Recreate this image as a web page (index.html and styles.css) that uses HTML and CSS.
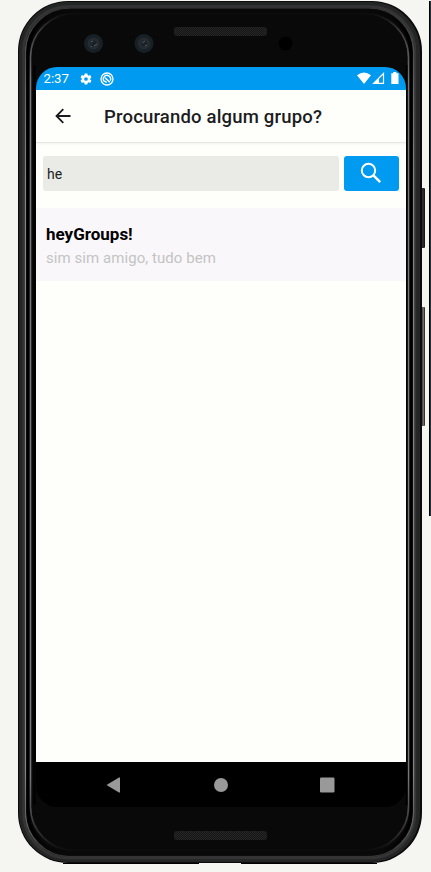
FILE: index.html
```html
<!DOCTYPE html>
<html lang="pt-BR">
<head>
<meta charset="utf-8">
<title>heyGroups</title>
<link rel="stylesheet" href="styles.css">
</head>
<body>
<div class="edge"></div>
<div class="phone">
  <svg class="frame" width="413" height="872" viewBox="18 0 413 872" fill="none" aria-hidden="true">
    <defs>
      <linearGradient id="fade" gradientUnits="userSpaceOnUse" x1="0" y1="12" x2="0" y2="852">
        <stop offset="0" stop-color="#777" stop-opacity="0"/>
        <stop offset=".02" stop-color="#777" stop-opacity=".4"/>
        <stop offset=".08" stop-color="#777"/>
        <stop offset=".91" stop-color="#777"/>
        <stop offset=".98" stop-color="#777" stop-opacity=".3"/>
        <stop offset="1" stop-color="#777" stop-opacity="0"/>
      </linearGradient>
      <linearGradient id="ring" gradientUnits="userSpaceOnUse" x1="0" y1="9" x2="0" y2="855">
        <stop offset="0" stop-color="#090909"/>
        <stop offset=".03" stop-color="#000"/>
        <stop offset=".97" stop-color="#000"/>
        <stop offset="1" stop-color="#090909"/>
      </linearGradient>
      <linearGradient id="fade2" gradientUnits="userSpaceOnUse" x1="0" y1="8" x2="0" y2="856">
        <stop offset="0" stop-color="#333"/>
        <stop offset=".1" stop-color="#666"/>
        <stop offset=".2" stop-color="#858585"/>
        <stop offset=".9" stop-color="#858585"/>
        <stop offset=".97" stop-color="#555"/>
        <stop offset="1" stop-color="#333"/>
      </linearGradient>
      <linearGradient id="key" x1="0" y1="0" x2="1" y2="0">
        <stop offset="0" stop-color="#171312"/><stop offset=".6" stop-color="#77706d"/><stop offset="1" stop-color="#171312"/>
      </linearGradient>
      <pattern id="mesh" width="2" height="2" patternUnits="userSpaceOnUse">
        <rect width="2" height="2" fill="#161616"/><path d="M0 0h1v1H0zM1 1h1v1H1z" fill="#262626"/>
      </pattern>
    </defs>
    <rect x="420" y="188" width="5" height="60" rx="1" fill="#2a2a2c"/>
    <path d="M424.500 189v58" stroke="#151515"/>
    <rect x="421" y="307" width="4" height="119" rx="1" fill="url(#key)"/>
    <rect x="18" y="1" width="404" height="862" rx="50" fill="#0b0b0b"/>
    <path d="M63 863.500H199M241 863.500H377" stroke="#000"/>
    <rect x="21.500" y="4.500" width="396" height="855" rx="47" stroke="#242525" stroke-width="5"/>
    <rect x="23.500" y="6.500" width="391.500" height="851.500" rx="45" stroke="#343434" stroke-width="2.500"/>
    <rect x="25.500" y="8" width="388" height="848.500" rx="44" stroke="url(#fade2)" stroke-width="1.400"/>
    <rect x="28" y="10.500" width="383" height="843.500" rx="42" fill="#090909" stroke="url(#ring)" stroke-width="3.400"/>
    <rect x="30.500" y="13.500" width="378" height="837" rx="44" stroke="url(#fade)" stroke-width="1.600"/>
    <path d="M34.500 65V805M406.500 65V805" stroke="#000" stroke-width="2"/>
    <rect x="174" y="27" width="93" height="9" rx="3" fill="url(#mesh)"/>
    <rect x="174" y="831" width="93" height="9" rx="3" fill="url(#mesh)"/>
    <circle cx="93.500" cy="43.500" r="9.500" fill="#172027"/>
    <circle cx="93.500" cy="43.500" r="6" fill="#282b2e"/>
    <circle cx="93.500" cy="43.500" r="3" fill="#18222b"/>
    <path d="M91 42l2-1M94 46l3-2M91 46l1 1" stroke="#555d62"/>
    <circle cx="144" cy="43.500" r="9.500" fill="#172027"/>
    <circle cx="144" cy="43.500" r="6" fill="#282b2e"/>
    <circle cx="144" cy="43.500" r="3" fill="#18222b"/>
    <path d="M142 43l3-2M145 46l2-1" stroke="#555d62"/>
    <circle cx="285.500" cy="43.500" r="7" fill="#000"/>
  </svg>
  <main class="screen">
    <div class="status">
      <span class="clock">2:37</span>
      <svg class="gear" width="14" height="14" viewBox="0 0 24 24"><path fill="#fff" fill-rule="evenodd" d="M19.140 12.940c.040-.300.060-.610.060-.940s-.020-.640-.070-.940l2.030-1.580c.180-.140.230-.410.120-.610l-1.920-3.320c-.120-.220-.370-.290-.590-.220l-2.390.960c-.500-.380-1.030-.700-1.620-.940l-.360-2.540c-.040-.240-.240-.410-.480-.410h-3.840c-.240 0-.430.170-.470.410l-.360 2.540c-.590.240-1.130.570-1.620.940l-2.390-.960c-.220-.080-.470 0-.590.220L2.740 8.870c-.120.210-.080.470.120.610l2.030 1.580c-.050.300-.090.630-.090.940s.020.640.070.940l-2.030 1.580c-.180.140-.230.410-.120.610l1.920 3.320c.120.220.370.290.590.220l2.390-.960c.500.380 1.030.700 1.620.940l.360 2.540c.050.240.240.410.480.410h3.840c.240 0 .440-.170.470-.410l.360-2.540c.590-.240 1.130-.560 1.620-.940l2.390.960c.220.080.470 0 .590-.220l1.920-3.320c.120-.220.070-.470-.120-.610zM12 15.200a3.200 3.200 0 1 1 0-6.400 3.200 3.200 0 0 1 0 6.400z"/></svg>
      <svg class="sync" width="14" height="14" viewBox="0 0 14 14" fill="none" stroke="#fff"><circle cx="7" cy="7" r="6" stroke-width="1.300"/><path d="M4 9.300A3.700 3.700 0 1 1 10.300 8.800" stroke-width="1.300"/><path d="M5 5.800l4.800 4.500M4.200 8.800l2.500 1.700" stroke-width="1.500"/></svg>
      <svg class="signals" width="42" height="13" viewBox="0 0 42 13"><path fill="#fff" d="M0 3.200Q7-2.200 14 3.200L7 12zM34.300 1.300h2V0h3v1.300h2.200V12h-7.200z"/><path d="M16.600 11.400H26.500V1.500z" fill="none" stroke="#fff" stroke-width="1.200"/><path fill="#fff" d="M16 12L22 6v6z"/></svg>
    </div>
    <div class="content">
      <header class="bar">
        <svg class="back" width="16" height="16" viewBox="0 0 16 16" fill="none" stroke="#1c1c1e" stroke-width="1.800"><path d="M15.500 8H1.800M8.300 1.200L1.500 8l6.800 6.800"/></svg>
        <h1 class="title">Procurando algum grupo?</h1>
      </header>
      <div class="search">
        <div class="field">he</div>
        <div class="button"><svg width="22" height="22" viewBox="0 0 22 22" fill="none" stroke="#fff"><circle cx="8.500" cy="8.500" r="6.700" stroke-width="2"/><path d="M13.200 13.200l7 7" stroke-width="2.500"/></svg></div>
      </div>
      <div class="group">
        <div class="name">heyGroups!</div>
        <div class="desc">sim sim amigo, tudo bem</div>
      </div>
    </div>
    <nav class="nav">
      <svg width="230" height="16" viewBox="0 0 230 16" fill="#999"><path d="M.500 8L13 .500H14v15H13z"/><circle cx="115" cy="8" r="7"/><rect x="214" y=".500" width="14.500" height="15" rx="1.300"/></svg>
    </nav>
  </main>
</div>
</body>
</html>
```
FILE: styles.css
```css
* { box-sizing: border-box; }
html, body { height: 100%; overflow: hidden; }
body {
  margin: 0;
  background: #f5f5f2;
  font-family: Roboto, sans-serif;
}
.edge {
  position: absolute;
  top: 1px;
  right: 0;
  width: 2px;
  height: 515px;
  background: #26313b;
  border-left: 1px solid #000;
}
.phone {
  position: relative;
  width: 404px;
  height: 872px;
  margin-left: 18px;
  padding: 67px 16px 0 18px;
}
.frame { position: absolute; left: 0; top: 0; }
.screen {
  position: relative;
  display: flex;
  flex-direction: column;
  width: 370px;
  height: 740px;
  border-radius: 21px;
  overflow: hidden;
}
.content { flex: 1; background: #fefffb; }
.status {
  display: flex;
  align-items: center;
  height: 23px;
  padding: 0 7px 0 7.500px;
  background: #009bf0;
  color: #fff;
  flex: none;
}
.clock { width: 26.500px; font-size: 13.200px; line-height: 23px; }
.gear { margin-left: 9px; }
.sync { margin-left: 7px; }
.signals { margin-left: auto; }
.bar {
  display: flex;
  align-items: center;
  height: 53px;
  padding-left: 18.500px;
  border-bottom: 1px solid #e6e6e3;
  box-shadow: 0 1px 2px #0000000d;
}
.title {
  margin: 2px 0 0 33.500px;
  font-size: 18.500px;
  font-weight: 500;
  letter-spacing: .18px;
  line-height: 24px;
  color: #1c1c1e;
  white-space: nowrap;
}
.search {
  display: flex;
  gap: 5px;
  padding: 13px 7px 17px;
}
.field {
  width: 296px;
  height: 35px;
  padding-left: 4px;
  border-radius: 3px;
  background: #eaebe6;
  font-size: 14px;
  line-height: 36px;
  color: #222;
}
.button {
  display: flex;
  align-items: center;
  justify-content: center;
  width: 55px;
  height: 35px;
  padding: 0 1px 1px 0;
  border-radius: 3px;
  background: #009bf0;
}
.group {
  height: 73px;
  padding: 15px 10px 0;
  background: #f9f7f9;
}
.name { font-size: 17px; font-weight: 700; line-height: 22px; color: #000; }
.desc {
  margin-top: 1px;
  font-size: 15px;
  letter-spacing: .06px;
  line-height: 24px;
  color: #c4c4c4;
  white-space: nowrap;
}
.nav {
  display: flex;
  align-items: center;
  height: 45px;
  padding-left: 70px;
  background: #000;
}
```
